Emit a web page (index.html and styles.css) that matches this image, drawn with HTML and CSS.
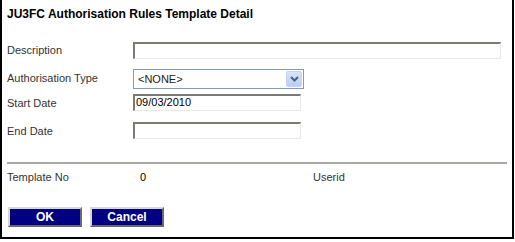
FILE: index.html
```html
<!DOCTYPE html>
<html lang="en">
<head>
    <meta charset="UTF-8">
    <title>JU3FC Authorisation Rules Template Detail</title>
    <link rel="stylesheet" href="styles.css">
</head>
<body>
    <div class="panel">
        <h1 class="title">JU3FC Authorisation Rules Template Detail</h1>

        <!-- Detail fields -->
        <div class="form">
            <div class="row row-desc">
                <label class="label">Description</label>
                <div class="field field-wide"></div>
            </div>
            <div class="row row-type">
                <label class="label">Authorisation Type</label>
                <div class="select">
                    <span class="select-text">&lt;NONE&gt;</span>
                    <span class="select-btn">
                        <svg width="9" height="6" viewBox="0 0 9 6"><path d="M1 1 L4.5 4.5 L8 1" fill="none" stroke="#4d6185" stroke-width="2"/></svg>
                    </span>
                </div>
            </div>
            <div class="row row-start">
                <label class="label">Start Date</label>
                <div class="field field-date">09/03/2010</div>
            </div>
            <div class="row row-end">
                <label class="label">End Date</label>
                <div class="field field-date"></div>
            </div>
        </div>

        <hr class="divider">

        <div class="info">
            <span class="label">Template No</span>
            <span class="info-value">0</span>
            <span class="info-user">Userid</span>
        </div>

        <div class="buttons">
            <button class="btn">OK</button>
            <button class="btn">Cancel</button>
        </div>
    </div>
</body>
</html>
```

FILE: styles.css
```css
* {
    margin: 0;
    padding: 0;
    box-sizing: border-box;
}

body {
    font-family: "Liberation Sans", Arial, sans-serif;
    background: #fff;
    color: #333;
}

.panel {
    width: 514px;
    height: 239px;
    border: 2px solid #000;
    border-top: none;
    padding: 0 6px 0 5px;
}

.title {
    font-size: 12px;
    font-weight: bold;
    color: #000;
    line-height: 15px;
    padding-top: 7px;
}

/* Form rows */
.form {
    margin-top: 19px;
}

.row {
    display: flex;
    align-items: flex-start;
}

.row-desc { height: 27px; }
.row-type { height: 26px; }
.row-start { height: 28px; }
.row-end { height: 21px; }

.label {
    display: block;
    width: 126px;
    font-size: 11px;
    line-height: 13px;
    color: #333;
}

.row-desc .label { padding-top: 3px; }
.row-type .label { padding-top: 4px; }
.row-start .label { padding-top: 3px; }
.row-end .label { padding-top: 3px; }

.field {
    height: 17px;
    border-top: 2px solid #7a7a74;
    border-left: 2px solid #7a7a74;
    border-right: 1px solid #e8e8e4;
    border-bottom: 1px solid #e8e8e4;
    font-size: 11px;
    line-height: 13px;
    color: #000;
    padding-left: 1px;
}

.row-desc .field { margin-top: 1px; }
.row-start .field,
.row-end .field { margin-top: 0; }

.field-wide { width: 368px; }
.field-date { width: 168px; }

.select {
    display: flex;
    align-items: center;
    width: 171px;
    height: 20px;
    margin-top: 1px;
    border: 1px solid #7f9db9;
    background: #fff;
    padding: 1px;
}

.select-text {
    flex: 1;
    font-size: 11px;
    color: #222;
    padding-left: 3px;
}

.select-btn {
    display: flex;
    align-items: center;
    justify-content: center;
    width: 16px;
    height: 16px;
    background: linear-gradient(#d8e4fb, #b9cdf4);
    border: 1px solid #c3d3fd;
    border-radius: 2px;
}

.divider {
    border: none;
    border-top: 2px solid #a8a8a4;
    margin-top: 19px;
    width: 500px;
}

.info {
    display: flex;
    align-items: center;
    height: 14px;
    margin-top: 6px;
    font-size: 11px;
}

.info .label {
    width: 133px;
}

.info-value {
    width: 173px;
    color: #000;
}

.info-user {
    color: #333;
}

.buttons {
    display: flex;
    gap: 8px;
    margin-top: 23px;
    padding-left: 1px;
}

.btn {
    width: 74px;
    height: 20px;
    background: #000080;
    color: #fff;
    font-family: "Liberation Sans", Arial, sans-serif;
    font-size: 12px;
    font-weight: bold;
    border: 2px solid;
    border-color: #d8d8d8 #6a6a6a #6a6a6a #d8d8d8;
}
```
